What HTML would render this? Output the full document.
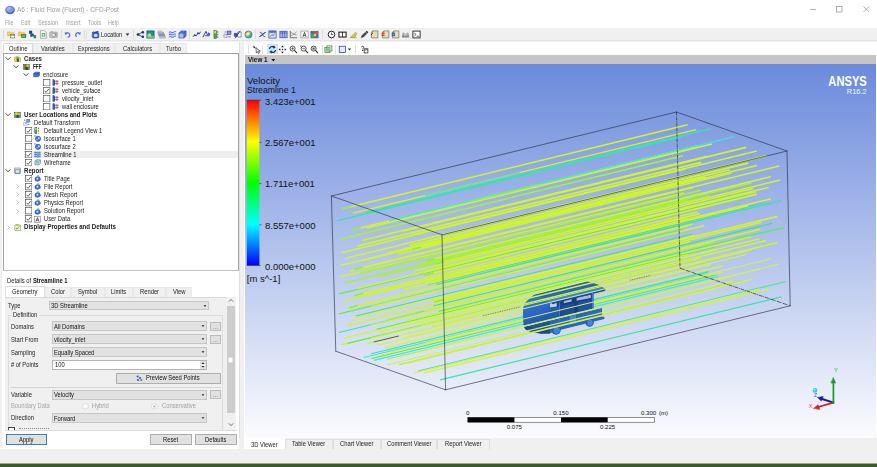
<!DOCTYPE html>
<html><head><meta charset="utf-8"><title>CFD-Post</title>
<style>
*{box-sizing:border-box;margin:0;padding:0}
html,body{width:877px;height:467px;overflow:hidden;background:#fff}
body{font-family:"Liberation Sans",sans-serif;font-size:6.6px;color:#222;-webkit-font-smoothing:antialiased}
#app{position:relative;width:877px;height:467px;overflow:hidden;background:#fff}
.abs{position:absolute}
.t{position:absolute;white-space:nowrap;line-height:8px;height:8px}
.b{font-weight:bold}

</style></head><body>
<div id="app">
<div class="abs" style="left:0;top:0;width:877px;height:28px;background:#fff"></div>
<svg class="abs" style="left:4.6px;top:4.6px" width="10.0" height="10.0" viewBox="0 0 10 10"><defs><radialGradient id="gi" cx="40%" cy="35%" r="65%"><stop offset="0" stop-color="#9fb4ec"/><stop offset="1" stop-color="#3f5fc0"/></radialGradient></defs><ellipse cx="5" cy="5" rx="4.8" ry="4.2" fill="url(#gi)"/><ellipse cx="5" cy="4.6" rx="2.8" ry="1.8" fill="none" stroke="#c9d6f7" stroke-width=".7" opacity=".8"/></svg>
<div class="t" style="left:17.2px;top:4.8px;height:10px;line-height:10px;font-size:7.4px;color:#9c9c9c;transform:scaleX(0.883);transform-origin:0 50%;">A6 : Fluid Flow (Fluent) - CFD-Post</div>
<svg class="abs" style="left:800px;top:0" width="77" height="18" viewBox="0 0 77 18"><g stroke="#9c9c9c" stroke-width=".8" fill="none"><path d="M10 9.5h6"/><rect x="36.5" y="6.5" width="5.5" height="5.5"/><path d="M63.5 6.5l5.5 5.5M69 6.5l-5.5 5.5"/></g></svg>
<div class="t" style="left:5.0px;top:18.8px;height:8px;line-height:8px;font-size:6.4px;color:#a0a0a0;transform:scaleX(0.815);transform-origin:0 50%;">File</div>
<div class="t" style="left:21.2px;top:18.8px;height:8px;line-height:8px;font-size:6.4px;color:#a0a0a0;transform:scaleX(0.834);transform-origin:0 50%;">Edit</div>
<div class="t" style="left:38.2px;top:18.8px;height:8px;line-height:8px;font-size:6.4px;color:#a0a0a0;transform:scaleX(0.878);transform-origin:0 50%;">Session</div>
<div class="t" style="left:65.8px;top:18.8px;height:8px;line-height:8px;font-size:6.4px;color:#a0a0a0;transform:scaleX(0.912);transform-origin:0 50%;">Insert</div>
<div class="t" style="left:88.0px;top:18.8px;height:8px;line-height:8px;font-size:6.4px;color:#a0a0a0;transform:scaleX(0.870);transform-origin:0 50%;">Tools</div>
<div class="t" style="left:108.4px;top:18.8px;height:8px;line-height:8px;font-size:6.4px;color:#a0a0a0;transform:scaleX(0.836);transform-origin:0 50%;">Help</div>
<div class="abs" style="left:0;top:28px;width:877px;height:12px;background:#f0f0f0"></div>
<div class="abs" style="left:0;top:40px;width:877px;height:2.4px;background:#e4e4e4"></div>
<div class="abs" style="left:0;top:41.4px;width:877px;height:1px;background:#f3f3f3"></div>
<div class="abs" style="left:3px;top:30px;width:1px;height:9px;background:#d8d8d8"></div>
<svg class="abs" style="left:7.3px;top:30.0px" width="9.0" height="9.0" viewBox="0 0 10 10"><path d="M0.5 2.2h3l.8.9h3.5v3.2h-7.3z" fill="#f5d547" stroke="#c9a51e" stroke-width=".5"/><rect x="3.6" y="4.8" width="5" height="4" fill="#fff" stroke="#555" stroke-width=".6"/><path d="M4.4 6.2h3.4" stroke="#3a7f3a" stroke-width=".7"/></svg>
<svg class="abs" style="left:17.7px;top:30.0px" width="9.0" height="9.0" viewBox="0 0 10 10"><path d="M0.5 2.2h3l.8.9h3.5v3.2h-7.3z" fill="#f5d547" stroke="#c9a51e" stroke-width=".5"/><rect x="3.8" y="5" width="5" height="3.6" fill="#3f8f4a" stroke="#2a5f2f" stroke-width=".5"/><path d="M4.6 6.8h3.2" stroke="#d9f0d9" stroke-width=".7"/></svg>
<svg class="abs" style="left:28.3px;top:30.0px" width="9.0" height="9.0" viewBox="0 0 10 10"><rect x="1.2" y="0.8" width="3.4" height="3.4" fill="#1d3fa8"/><rect x="3.2" y="4" width="3.2" height="3.2" fill="#24479f"/><path d="M2.9 4.2v3.2h1" stroke="#222" stroke-width=".6" fill="none"/><rect x="6.2" y="5.6" width="2.8" height="3.6" fill="#2f8f3a"/></svg>
<svg class="abs" style="left:39.0px;top:30.0px" width="9.0" height="9.0" viewBox="0 0 10 10"><path d="M1.6.8h4.6l2 2v6.4h-6.6z" fill="#fff" stroke="#6a7a6a" stroke-width=".6"/><rect x="3" y="3.2" width="4" height="4.2" fill="#58b058"/><path d="M3.6 5.4h2.8M5 4v2.8" stroke="#e8ffe8" stroke-width=".7"/></svg>
<svg class="abs" style="left:49.2px;top:30.0px" width="9.0" height="9.0" viewBox="0 0 10 10"><rect x="0.8" y="2.4" width="8.4" height="6" rx=".6" fill="#c9c9c9" stroke="#8a8a8a" stroke-width=".6"/><rect x="2" y="1.4" width="2.4" height="1.2" fill="#aaa"/><circle cx="5.2" cy="5.4" r="1.9" fill="#eee" stroke="#777" stroke-width=".6"/><rect x="6.6" y="3.2" width="1.8" height="3.6" fill="#9a9a9a"/></svg>
<div class="abs" style="left:60.5px;top:30px;width:1px;height:9px;background:#dcdcdc"></div>
<svg class="abs" style="left:63.5px;top:31.0px" width="7.4" height="7.4" viewBox="0 0 10 10"><path d="M2.4 3.6C4 1.6 7.4 2 7.8 4.8 8 6.8 6.6 8.2 4.8 8.6" fill="none" stroke="#4a7ad8" stroke-width="1.7"/><path d="M0.8 1.4l.8 4 3.4-1.8z" fill="#4a7ad8"/></svg>
<svg class="abs" style="left:74.1px;top:31.0px" width="7.4" height="7.4" viewBox="0 0 10 10"><path d="M7.6 3.6C6 1.6 2.6 2 2.2 4.8 2 6 2.6 7 3.8 7.8" fill="none" stroke="#4a7ad8" stroke-width="1.7"/><path d="M9.2 1.4l-.8 4-3.4-1.8z" fill="#4a7ad8"/></svg>
<div class="abs" style="left:84.2px;top:30px;width:1px;height:9px;background:#dcdcdc"></div>
<svg class="abs" style="left:90.5px;top:30.0px" width="9.0" height="9.0" viewBox="0 0 10 10"><path d="M2.2 2.4L7.6 1l1.6 1.4-5 1.6z" fill="#1f3fae"/><rect x="1.4" y="3" width="7.4" height="6" rx="1.8" fill="#3561d8" stroke="#1c3c9c" stroke-width=".6"/><ellipse cx="5.2" cy="6" rx="2.1" ry="1.8" fill="#d4e2ff"/><path d="M1 3.4l1.8-1.6" stroke="#1f3fae" stroke-width="1"/></svg>
<div class="t" style="left:100.6px;top:30.6px;height:8px;line-height:8px;font-size:6.3px;color:#222;transform:scaleX(0.890);transform-origin:0 50%;">Location</div>
<div class="abs" style="left:86px;top:30px;width:1px;height:9px;background:#e4e4e4"></div>
<div class="abs" style="left:133.2px;top:30px;width:1px;height:9px;background:#dcdcdc"></div>
<svg class="abs" style="left:123.1px;top:30.3px" width="9.0" height="9.0" viewBox="0 0 10 10"><path d="M2.9 3.8h4.2L5 6.3z" fill="#222"/></svg>
<svg class="abs" style="left:135.7px;top:30.0px" width="9.0" height="9.0" viewBox="0 0 10 10"><path d="M2 5l5.4-2.6M2 5l5.4 2.6" stroke="#1b2f7a" stroke-width=".9"/><circle cx="2.2" cy="5" r="1.5" fill="#1b2f7a"/><circle cx="7.6" cy="2.4" r="1.4" fill="#1b2f7a"/><circle cx="7.6" cy="7.6" r="1.4" fill="#1b2f7a"/></svg>
<svg class="abs" style="left:146.1px;top:30.0px" width="9.0" height="9.0" viewBox="0 0 10 10"><rect x="1" y="1" width="8" height="8" fill="#1f8f8f" stroke="#15506a" stroke-width=".7"/><path d="M1.4 5.4c2-2.6 4-2.2 4.2 0s2 2.4 3.2.4v2.8h-7.4z" fill="#7fd0a0"/><circle cx="4.2" cy="5.6" r="1.5" fill="#f0d040"/></svg>
<svg class="abs" style="left:157.0px;top:30.0px" width="9.0" height="9.0" viewBox="0 0 10 10"><path d="M1 2.2h6.4v2H1z" fill="#b8c0cc" stroke="#7a8494" stroke-width=".5"/><path d="M2 4.6h6.4v2H2z" fill="#7f9fd8" stroke="#4a64a6" stroke-width=".5"/><path d="M3 7h6.2v2H3z" fill="#c8ccd4" stroke="#7a8494" stroke-width=".5"/><path d="M1 1.2h4" stroke="#8a8a8a" stroke-width=".7"/></svg>
<svg class="abs" style="left:167.5px;top:30.0px" width="9.0" height="9.0" viewBox="0 0 10 10"><path d="M1 2.6c2-1.6 3 1.2 5 0s2-1 3-.6M1 5.2c2-1.6 3 1.2 5 0s2-1 3-.6M1 7.8c2-1.6 3 1.2 5 0s2-1 3-.6" fill="none" stroke="#2c5fc4" stroke-width="1.1"/><path d="M1 4h8M1 6.6h8" stroke="#9ab4e8" stroke-width=".6"/></svg>
<svg class="abs" style="left:177.7px;top:30.0px" width="9.0" height="9.0" viewBox="0 0 10 10"><path d="M1 3.4L3.4 1H9v5.6L6.6 9H1z" fill="#4f7fdc" stroke="#1f3f9a" stroke-width=".6"/><path d="M1 3.4h5.6V9M6.6 3.4L9 1" fill="none" stroke="#1f3f9a" stroke-width=".6"/><rect x="1.6" y="4" width="4.4" height="4.4" fill="#a9c4f4"/></svg>
<div class="abs" style="left:189px;top:30px;width:1px;height:9px;background:#dcdcdc"></div>
<svg class="abs" style="left:191.5px;top:30.0px" width="9.0" height="9.0" viewBox="0 0 10 10"><path d="M1 7.6l2-2 1.6 1 2-3 1.4.8L9.4 2" fill="none" stroke="#2b3f9c" stroke-width="1.1"/><circle cx="3" cy="5.6" r="1" fill="#2b3f9c"/><circle cx="6.6" cy="3.6" r="1" fill="#2b3f9c"/></svg>
<svg class="abs" style="left:201.8px;top:30.0px" width="9.0" height="9.0" viewBox="0 0 10 10"><path d="M1 8l3.4-6.4L6.4 6l2.6-1.6" fill="none" stroke="#2b3f9c" stroke-width="1.1"/><path d="M3.2 6.4h5.6" stroke="#2b3f9c" stroke-width=".9"/><path d="M7 2.4l2.2 2-2.6.8z" fill="#2b3f9c"/></svg>
<svg class="abs" style="left:212.4px;top:30.0px" width="9.0" height="9.0" viewBox="0 0 10 10"><rect x="2.2" y=".8" width="2.8" height="8.4" fill="#3fae4a" stroke="#1c5f24" stroke-width=".6"/><rect x="2.6" y="1.2" width="2" height="2.6" fill="#e9e24a"/><path d="M6.4 1.4v7.4" stroke="#222" stroke-width=".8" stroke-dasharray="1.6 1.2"/></svg>
<svg class="abs" style="left:223.2px;top:30.0px" width="9.0" height="9.0" viewBox="0 0 10 10"><rect x="1" y="4.6" width="3.6" height="3.6" fill="none" stroke="#3a4a8a" stroke-width=".8" stroke-dasharray="1 .8"/><rect x="5.2" y="1.2" width="3.6" height="3.6" fill="#7f9fe0" stroke="#2b3f9c" stroke-width=".7"/><path d="M2 2.2h2M6 7.6h2.6M4.8 4.8l-1.2 1.2" stroke="#2b3f9c" stroke-width=".8"/></svg>
<svg class="abs" style="left:233.4px;top:30.0px" width="9.0" height="9.0" viewBox="0 0 10 10"><path d="M1 3.4h4.2v4H1z" fill="#2f55c8"/><path d="M5.2 2.2h3.8v5.6H5.2z" fill="#fff" stroke="#2f3f7a" stroke-width=".6"/><path d="M2.4 9L8 1" stroke="#1b2660" stroke-width=".9"/></svg>
<svg class="abs" style="left:243.9px;top:30.0px" width="9.0" height="9.0" viewBox="0 0 10 10"><defs><linearGradient id="cw" x1="0" y1="0" x2="1" y2="1"><stop offset="0" stop-color="#e85050"/><stop offset=".35" stop-color="#e8d84a"/><stop offset=".6" stop-color="#4ac86a"/><stop offset="1" stop-color="#3a6ae0"/></linearGradient></defs><circle cx="5" cy="5" r="3.9" fill="url(#cw)" stroke="#3a78c8" stroke-width=".9"/><circle cx="4.4" cy="4.6" r="1.5" fill="#fff" opacity=".75"/></svg>
<div class="abs" style="left:255px;top:30px;width:1px;height:9px;background:#dcdcdc"></div>
<svg class="abs" style="left:257.6px;top:30.0px" width="9.0" height="9.0" viewBox="0 0 10 10"><path d="M1.6 7.6L8.4 2.4" stroke="#1b2f8a" stroke-width="1.2"/><path d="M2 2.6c1.6 0 2.6 1 3 2.4s1.4 2.4 3 2.4" stroke="#2b4fc4" stroke-width="1.1" fill="none"/></svg>
<svg class="abs" style="left:268.3px;top:30.0px" width="9.0" height="9.0" viewBox="0 0 10 10"><rect x="1" y="1" width="8" height="8" fill="#dfe6f6" stroke="#2b4fb4" stroke-width=".8"/><rect x="1.4" y="1.4" width="7.2" height="1.6" fill="#2b4fb4"/><path d="M2.4 7.4l2-2.4 1.4 1.4L7.6 4" fill="none" stroke="#2b4fb4" stroke-width=".8"/></svg>
<svg class="abs" style="left:279.0px;top:30.0px" width="9.0" height="9.0" viewBox="0 0 10 10"><rect x="1" y="1.4" width="8" height="7.2" fill="#a9c0ee" stroke="#2b4fb4" stroke-width=".8"/><path d="M3.7 1.4v7.2M6.3 1.4v7.2M1 3.4h8" stroke="#2b4fb4" stroke-width=".7"/></svg>
<svg class="abs" style="left:289.3px;top:30.0px" width="9.0" height="9.0" viewBox="0 0 10 10"><path d="M1.4 1v7.6H9" fill="none" stroke="#444" stroke-width=".8"/><path d="M2 3c2 0 3 2.4 6.6 2.6" fill="none" stroke="#d04040" stroke-width=".8"/><path d="M2 6.6c2-.4 4-2.4 6.4-4.6" fill="none" stroke="#3f9f4f" stroke-width=".8"/></svg>
<svg class="abs" style="left:299.8px;top:30.0px" width="9.0" height="9.0" viewBox="0 0 10 10"><rect x="1" y="1.2" width="8" height="7.6" fill="#fff" stroke="#8a8a8a" stroke-width=".7"/><path d="M3.2 7.6L5 2.6l1.8 5M3.9 6h2.2" fill="none" stroke="#222" stroke-width=".8"/></svg>
<svg class="abs" style="left:310.3px;top:30.0px" width="9.0" height="9.0" viewBox="0 0 10 10"><rect x="1" y="1.4" width="8" height="7.4" fill="#3b6fc8" stroke="#555" stroke-width=".6"/><rect x="1.4" y="4.6" width="3.6" height="3.8" fill="#3fae4a"/><rect x="5" y="1.8" width="3.6" height="3" fill="#d85040"/><circle cx="5.6" cy="5.6" r="1.5" fill="#e8d84a"/></svg>
<div class="abs" style="left:322px;top:30px;width:1px;height:9px;background:#dcdcdc"></div>
<svg class="abs" style="left:327.4px;top:30.0px" width="9.0" height="9.0" viewBox="0 0 10 10"><circle cx="5" cy="5" r="3.7" fill="#fff" stroke="#222" stroke-width="1.1"/><path d="M5 2.8V5h1.8" fill="none" stroke="#222" stroke-width=".8"/></svg>
<svg class="abs" style="left:338.2px;top:30.0px" width="9.0" height="9.0" viewBox="0 0 10 10"><rect x="1" y="2.4" width="8" height="5.4" fill="#fff" stroke="#222" stroke-width="1.2"/><path d="M5 2.4v5.4" stroke="#222" stroke-width=".9"/></svg>
<svg class="abs" style="left:349.2px;top:30.0px" width="9.0" height="9.0" viewBox="0 0 10 10"><path d="M1.4 8.2L7.4 2.6l1.2 1.2-2 4.4z" fill="#c8c84a" stroke="#8a8a2a" stroke-width=".5"/><path d="M1 8.6h7.6" stroke="#9aa84a" stroke-width=".8"/></svg>
<svg class="abs" style="left:359.6px;top:30.0px" width="9.0" height="9.0" viewBox="0 0 10 10"><path d="M1.2 8.8l1-2.6L6 2.4l1.6 1.6L3.8 7.8z" fill="#444" stroke="#222" stroke-width=".5"/><path d="M6.4 2l1.2-1.2L9.2 2.4 8 3.6z" fill="#222"/><path d="M1.2 8.8l1.6-.6" stroke="#d8c040" stroke-width=".8"/></svg>
<svg class="abs" style="left:370.1px;top:30.0px" width="9.0" height="9.0" viewBox="0 0 10 10"><path d="M3 1h5.8v7.8H1.6V2.6z" fill="#e8dcb8" stroke="#6a6248" stroke-width=".7"/><path d="M3 1v1.8H1.6" fill="none" stroke="#6a6248" stroke-width=".6"/><path d="M1 5.6l2-2" stroke="#222" stroke-width=".9"/></svg>
<svg class="abs" style="left:380.5px;top:30.0px" width="9.0" height="9.0" viewBox="0 0 10 10"><path d="M3 1h5.8v7.8H1.6V2.6z" fill="#e8dcb8" stroke="#6a6248" stroke-width=".7"/><path d="M3 1v1.8H1.6" fill="none" stroke="#6a6248" stroke-width=".6"/><rect x="0.8" y="3" width="3.2" height="3.6" fill="#d83030"/><path d="M1.6 4.8h3" stroke="#fff" stroke-width=".6"/></svg>
<svg class="abs" style="left:390.8px;top:30.0px" width="9.0" height="9.0" viewBox="0 0 10 10"><path d="M3 1h5.8v7.8H1.6V2.6z" fill="#e8dcb8" stroke="#6a6248" stroke-width=".7"/><path d="M3 1v1.8H1.6" fill="none" stroke="#6a6248" stroke-width=".6"/><rect x="0.8" y="3" width="3.6" height="3.8" fill="#2f55c8"/><path d="M1.6 4.9h2.4" stroke="#cfe0ff" stroke-width=".6"/></svg>
<svg class="abs" style="left:401.1px;top:30.0px" width="9.0" height="9.0" viewBox="0 0 10 10"><rect x="1.4" y="3" width="2.4" height="5.2" fill="#a8a8a8"/><rect x="6.2" y="3" width="2.4" height="5.2" fill="#a8a8a8"/><rect x="1" y="6" width="8" height="2.4" fill="#909090"/><rect x="3.8" y="4" width="2.4" height="1.6" fill="#b8b8b8"/></svg>
<svg class="abs" style="left:412.1px;top:30.0px" width="9.0" height="9.0" viewBox="0 0 10 10"><rect x="1" y="1.2" width="8" height="7.6" fill="#fff" stroke="#222" stroke-width="1"/><path d="M2.6 3.4L4.6 5 2.6 6.6M5.2 7h2.4" fill="none" stroke="#222" stroke-width=".8"/></svg>
<div class="abs" style="left:0;top:42.4px;width:245px;height:406px;background:#fff"></div>
<div class="abs" style="left:0;top:42.4px;width:240px;height:11px;background:#fff"></div>
<div class="abs" style="left:2.6px;top:42.6px;width:30.799999999999997px;height:10.600000000000001px;background:#fff;border:0.6px solid #dcdcdc;border-bottom:none"></div>
<div class="t" style="left:8.8px;top:44.9px;height:8px;line-height:8px;font-size:6.3px;color:#222;transform:scaleX(0.922);transform-origin:0 50%;">Outline</div>
<div class="abs" style="left:33.4px;top:43.4px;width:39.6px;height:9.800000000000004px;background:#f0f0f0;border:0.6px solid #e9e9e9;border-bottom:none"></div>
<div class="t" style="left:41.3px;top:44.9px;height:8px;line-height:8px;font-size:6.3px;color:#222;transform:scaleX(0.922);transform-origin:0 50%;">Variables</div>
<div class="abs" style="left:73px;top:43.4px;width:41.5px;height:9.800000000000004px;background:#f0f0f0;border:0.6px solid #e9e9e9;border-bottom:none"></div>
<div class="t" style="left:77.9px;top:44.9px;height:8px;line-height:8px;font-size:6.3px;color:#222;transform:scaleX(0.922);transform-origin:0 50%;">Expressions</div>
<div class="abs" style="left:114.5px;top:43.4px;width:45.0px;height:9.800000000000004px;background:#f0f0f0;border:0.6px solid #e9e9e9;border-bottom:none"></div>
<div class="t" style="left:122.5px;top:44.9px;height:8px;line-height:8px;font-size:6.3px;color:#222;transform:scaleX(0.922);transform-origin:0 50%;">Calculators</div>
<div class="abs" style="left:159.5px;top:43.4px;width:27.5px;height:9.800000000000004px;background:#f0f0f0;border:0.6px solid #e9e9e9;border-bottom:none"></div>
<div class="t" style="left:165.8px;top:44.9px;height:8px;line-height:8px;font-size:6.3px;color:#222;transform:scaleX(0.922);transform-origin:0 50%;">Turbo</div>
<div class="abs" style="left:2.6px;top:53px;width:236px;height:218.4px;background:#fff;border:0.8px solid #a2a2a2;border-bottom-color:#c2c2c2"></div>
<div class="abs" style="left:0;top:42.4px;width:2.2px;height:406px;background:#f0f0f0"></div>
<div class="abs" style="left:23.6px;top:150.9px;width:214.4px;height:7.4px;background:#eeeeee"></div>
<svg class="abs" style="left:5.2px;top:55.7px" width="6" height="5.4" viewBox="0 0 6 5.4"><path d="M.6 1.3L3 3.8 5.4 1.3" fill="none" stroke="#484848" stroke-width="1"/></svg>
<svg class="abs" style="left:14.2px;top:54.8px" width="7" height="7" viewBox="0 0 7 7"><path d="M.6 2h2.4l.6.8h3v3.8H.6z" fill="#e8d86a" stroke="#a89a2a" stroke-width=".5"/><circle cx="3.6" cy="3" r="1.7" fill="#7fb84a"/><circle cx="3.8" cy="4.6" r="1.1" fill="#3a5a2a"/><rect x="2.8" y="5" width="2.2" height="1.6" fill="#444"/></svg>
<div class="t" style="left:24.4px;top:54.7px;height:8px;line-height:8px;font-size:6.3px;font-weight:bold;color:#1a1a1a;transform:scaleX(0.968);transform-origin:0 50%;">Cases</div>
<svg class="abs" style="left:13.2px;top:63.7px" width="6" height="5.4" viewBox="0 0 6 5.4"><path d="M.6 1.3L3 3.8 5.4 1.3" fill="none" stroke="#484848" stroke-width="1"/></svg>
<svg class="abs" style="left:23.2px;top:62.8px" width="7" height="7" viewBox="0 0 7 7"><rect x=".6" y="1.4" width="5.8" height="5.2" fill="#4a9a4a" stroke="#2a5a2a" stroke-width=".5"/><circle cx="2.6" cy="2.4" r="1.4" fill="#d84a3a"/><circle cx="4.6" cy="2.8" r="1.2" fill="#e8c84a"/><rect x="2.4" y="4.2" width="2.4" height="2.4" fill="#2a3a2a"/></svg>
<div class="t" style="left:33.4px;top:62.7px;height:8px;line-height:8px;font-size:6.3px;font-weight:bold;color:#1a1a1a;transform:scaleX(0.745);transform-origin:0 50%;">FFF</div>
<svg class="abs" style="left:23.0px;top:71.8px" width="6" height="5.4" viewBox="0 0 6 5.4"><path d="M.6 1.3L3 3.8 5.4 1.3" fill="none" stroke="#484848" stroke-width="1"/></svg>
<svg class="abs" style="left:33.0px;top:70.9px" width="7" height="7" viewBox="0 0 7 7"><path d="M.6 2.6L2 1.2h4.6v3.2L5.2 5.8H.6z" fill="#3f6fd8" stroke="#1f3f9a" stroke-width=".5"/><path d="M.6 2.6h4.6v3.2M5.2 2.6l1.4-1.4" fill="none" stroke="#1f3f9a" stroke-width=".4"/></svg>
<div class="t" style="left:42.8px;top:70.5px;height:8px;line-height:8px;font-size:6.3px;color:#1a1a1a;transform:scaleX(0.922);transform-origin:0 50%;">enclosure</div>
<svg class="abs" style="left:43.3px;top:78.7px" width="7.4" height="7.4" viewBox="0 0 7.4 7.4"><rect x=".4" y=".4" width="6.5" height="6.5" fill="#fff" stroke="#4a4a4a" stroke-width=".65"/></svg>
<svg class="abs" style="left:52.0px;top:78.9px" width="7" height="7" viewBox="0 0 7 7"><path d="M.8.6h1.4l.8 1v4.2l-.8.8H.8z" fill="#2f5fd0" stroke="#1b3a9a" stroke-width=".4"/><path d="M3.4 2.3h3.2M3.4 4.6h3.2" stroke="#d03030" stroke-width=".8"/><path d="M5 1v5" stroke="#7a2a2a" stroke-width=".6"/></svg>
<div class="t" style="left:61.6px;top:78.5px;height:8px;line-height:8px;font-size:6.3px;color:#1a1a1a;transform:scaleX(0.922);transform-origin:0 50%;">pressure_outlet</div>
<svg class="abs" style="left:43.3px;top:86.7px" width="7.4" height="7.4" viewBox="0 0 7.4 7.4"><rect x=".4" y=".4" width="6.5" height="6.5" fill="#fff" stroke="#4a4a4a" stroke-width=".65"/><path d="M1.6 3.8l1.5 1.5L5.8 2" fill="none" stroke="#333" stroke-width=".8"/></svg>
<svg class="abs" style="left:52.0px;top:86.9px" width="7" height="7" viewBox="0 0 7 7"><path d="M.8.6h1.4l.8 1v4.2l-.8.8H.8z" fill="#2f5fd0" stroke="#1b3a9a" stroke-width=".4"/><path d="M3.4 2.3h3.2M3.4 4.6h3.2" stroke="#d03030" stroke-width=".8"/><path d="M5 1v5" stroke="#7a2a2a" stroke-width=".6"/></svg>
<div class="t" style="left:61.6px;top:86.5px;height:8px;line-height:8px;font-size:6.3px;color:#1a1a1a;transform:scaleX(0.922);transform-origin:0 50%;">vehicle_suface</div>
<svg class="abs" style="left:43.3px;top:94.8px" width="7.4" height="7.4" viewBox="0 0 7.4 7.4"><rect x=".4" y=".4" width="6.5" height="6.5" fill="#fff" stroke="#4a4a4a" stroke-width=".65"/></svg>
<svg class="abs" style="left:52.0px;top:95.0px" width="7" height="7" viewBox="0 0 7 7"><path d="M.8.6h1.4l.8 1v4.2l-.8.8H.8z" fill="#2f5fd0" stroke="#1b3a9a" stroke-width=".4"/><path d="M3.4 2.3h3.2M3.4 4.6h3.2" stroke="#d03030" stroke-width=".8"/><path d="M5 1v5" stroke="#7a2a2a" stroke-width=".6"/></svg>
<div class="t" style="left:61.6px;top:94.6px;height:8px;line-height:8px;font-size:6.3px;color:#1a1a1a;transform:scaleX(0.922);transform-origin:0 50%;">vilocity_inlet</div>
<svg class="abs" style="left:43.3px;top:102.8px" width="7.4" height="7.4" viewBox="0 0 7.4 7.4"><rect x=".4" y=".4" width="6.5" height="6.5" fill="#fff" stroke="#4a4a4a" stroke-width=".65"/></svg>
<svg class="abs" style="left:52.0px;top:103.0px" width="7" height="7" viewBox="0 0 7 7"><path d="M.8.6h1.4l.8 1v4.2l-.8.8H.8z" fill="#2f5fd0" stroke="#1b3a9a" stroke-width=".4"/><path d="M3.4 2.3h3.2M3.4 4.6h3.2" stroke="#d03030" stroke-width=".8"/><path d="M5 1v5" stroke="#7a2a2a" stroke-width=".6"/></svg>
<div class="t" style="left:61.6px;top:102.6px;height:8px;line-height:8px;font-size:6.3px;color:#1a1a1a;transform:scaleX(0.922);transform-origin:0 50%;">wall enclosure</div>
<svg class="abs" style="left:5.2px;top:111.9px" width="6" height="5.4" viewBox="0 0 6 5.4"><path d="M.6 1.3L3 3.8 5.4 1.3" fill="none" stroke="#484848" stroke-width="1"/></svg>
<svg class="abs" style="left:14.2px;top:111.0px" width="7" height="7" viewBox="0 0 7 7"><rect x=".6" y="1.2" width="5.8" height="5.4" fill="#5aa84a" stroke="#2a5a2a" stroke-width=".5"/><circle cx="2.4" cy="2.6" r="1.3" fill="#e8d84a"/><circle cx="4.8" cy="3" r="1.2" fill="#e8c040"/><rect x="2.6" y="4.2" width="2" height="2.4" fill="#2a3a2a"/></svg>
<div class="t" style="left:24.4px;top:110.9px;height:8px;line-height:8px;font-size:6.3px;font-weight:bold;color:#1a1a1a;transform:scaleX(0.968);transform-origin:0 50%;">User Locations and Plots</div>
<svg class="abs" style="left:23.4px;top:119.1px" width="7" height="7" viewBox="0 0 7 7"><rect x="3.8" y=".4" width="2.8" height="2.8" fill="#6f9fe8" stroke="#2b4fb4" stroke-width=".5"/><rect x=".6" y="3.8" width="2.6" height="2.6" fill="none" stroke="#2b4fb4" stroke-width=".6" stroke-dasharray=".9 .6"/><path d="M1 1.2h1.6M3.4 3.4l-1 1M4.4 5.6h2" stroke="#2b4fb4" stroke-width=".7"/></svg>
<div class="t" style="left:33.6px;top:118.7px;height:8px;line-height:8px;font-size:6.3px;color:#1a1a1a;transform:scaleX(0.922);transform-origin:0 50%;">Default Transform</div>
<svg class="abs" style="left:24.5px;top:126.9px" width="7.4" height="7.4" viewBox="0 0 7.4 7.4"><rect x=".4" y=".4" width="6.5" height="6.5" fill="#fff" stroke="#4a4a4a" stroke-width=".65"/><path d="M1.6 3.8l1.5 1.5L5.8 2" fill="none" stroke="#333" stroke-width=".8"/></svg>
<svg class="abs" style="left:33.8px;top:127.1px" width="7" height="7" viewBox="0 0 7 7"><rect x=".8" y=".4" width="2" height="6.2" fill="#3fb86a" stroke="#1c5f24" stroke-width=".5"/><rect x="1.1" y=".7" width="1.4" height="2" fill="#e8e04a"/><rect x="1.1" y="4.6" width="1.4" height="1.7" fill="#3a8ae0"/><path d="M4.6.6v6" stroke="#222" stroke-width=".7" stroke-dasharray="1.6 1"/></svg>
<div class="t" style="left:43.7px;top:126.7px;height:8px;line-height:8px;font-size:6.3px;color:#1a1a1a;transform:scaleX(0.922);transform-origin:0 50%;">Default Legend View 1</div>
<svg class="abs" style="left:24.5px;top:134.9px" width="7.4" height="7.4" viewBox="0 0 7.4 7.4"><rect x=".4" y=".4" width="6.5" height="6.5" fill="#fff" stroke="#4a4a4a" stroke-width=".65"/></svg>
<svg class="abs" style="left:33.8px;top:135.1px" width="7" height="7" viewBox="0 0 7 7"><circle cx="4" cy="3.8" r="2.6" fill="#3f6fe0" stroke="#1f3f9a" stroke-width=".6"/><circle cx="4.8" cy="3.2" r="1" fill="#cfe0ff"/><circle cx="3" cy="4.8" r=".8" fill="#a9c4f4"/><circle cx=".9" cy=".9" r=".7" fill="#2b4fb4"/></svg>
<div class="t" style="left:43.7px;top:134.7px;height:8px;line-height:8px;font-size:6.3px;color:#1a1a1a;transform:scaleX(0.922);transform-origin:0 50%;">Isosurface 1</div>
<svg class="abs" style="left:24.5px;top:143.0px" width="7.4" height="7.4" viewBox="0 0 7.4 7.4"><rect x=".4" y=".4" width="6.5" height="6.5" fill="#fff" stroke="#4a4a4a" stroke-width=".65"/></svg>
<svg class="abs" style="left:33.8px;top:143.2px" width="7" height="7" viewBox="0 0 7 7"><circle cx="4" cy="3.8" r="2.6" fill="#3f6fe0" stroke="#1f3f9a" stroke-width=".6"/><circle cx="4.8" cy="3.2" r="1" fill="#cfe0ff"/><circle cx="3" cy="4.8" r=".8" fill="#a9c4f4"/><circle cx=".9" cy=".9" r=".7" fill="#2b4fb4"/></svg>
<div class="t" style="left:43.7px;top:142.8px;height:8px;line-height:8px;font-size:6.3px;color:#1a1a1a;transform:scaleX(0.922);transform-origin:0 50%;">Isosurface 2</div>
<svg class="abs" style="left:24.5px;top:151.0px" width="7.4" height="7.4" viewBox="0 0 7.4 7.4"><rect x=".4" y=".4" width="6.5" height="6.5" fill="#fff" stroke="#4a4a4a" stroke-width=".65"/><path d="M1.6 3.8l1.5 1.5L5.8 2" fill="none" stroke="#333" stroke-width=".8"/></svg>
<svg class="abs" style="left:33.8px;top:151.2px" width="7" height="7" viewBox="0 0 7 7"><rect x=".4" y=".6" width="6.2" height="5.8" fill="#a9c4f4"/><path d="M.4 1.6c2-1 3 1 4.2.2s1.4-.6 2-.4M.4 3.6c2-1 3 1 4.2.2s1.4-.6 2-.4M.4 5.6c2-1 3 1 4.2.2s1.4-.6 2-.4" fill="none" stroke="#2b5fd0" stroke-width=".9"/></svg>
<div class="t" style="left:43.7px;top:150.8px;height:8px;line-height:8px;font-size:6.3px;color:#1a1a1a;transform:scaleX(0.922);transform-origin:0 50%;">Streamline 1</div>
<svg class="abs" style="left:24.5px;top:159.1px" width="7.4" height="7.4" viewBox="0 0 7.4 7.4"><rect x=".4" y=".4" width="6.5" height="6.5" fill="#fff" stroke="#4a4a4a" stroke-width=".65"/><path d="M1.6 3.8l1.5 1.5L5.8 2" fill="none" stroke="#333" stroke-width=".8"/></svg>
<svg class="abs" style="left:33.8px;top:159.3px" width="7" height="7" viewBox="0 0 7 7"><path d="M1 2.2L2.4.8h4v3.6L5 5.8H1z" fill="#e8f4f8" stroke="#3a6a8a" stroke-width=".6"/><path d="M1 2.2h4v3.6M5 2.2L6.4.8M3 .8v3.6M1 4h4" fill="none" stroke="#3a8a7a" stroke-width=".5"/></svg>
<div class="t" style="left:43.7px;top:158.9px;height:8px;line-height:8px;font-size:6.3px;color:#1a1a1a;transform:scaleX(0.922);transform-origin:0 50%;">Wireframe</div>
<svg class="abs" style="left:5.2px;top:168.2px" width="6" height="5.4" viewBox="0 0 6 5.4"><path d="M.6 1.3L3 3.8 5.4 1.3" fill="none" stroke="#484848" stroke-width="1"/></svg>
<svg class="abs" style="left:14.2px;top:167.3px" width="7" height="7" viewBox="0 0 7 7"><rect x=".8" y="1" width="5.4" height="5.6" fill="#7f9fd8" stroke="#4a5a8a" stroke-width=".5"/><rect x=".8" y="1" width="5.4" height="1.4" fill="#d8d070"/><rect x="1.8" y="3.2" width="3.4" height="2.6" fill="#dfe8f8"/></svg>
<div class="t" style="left:24.4px;top:167.2px;height:8px;line-height:8px;font-size:6.3px;font-weight:bold;color:#1a1a1a;transform:scaleX(0.968);transform-origin:0 50%;">Report</div>
<svg class="abs" style="left:24.5px;top:175.1px" width="7.4" height="7.4" viewBox="0 0 7.4 7.4"><rect x=".4" y=".4" width="6.5" height="6.5" fill="#fff" stroke="#4a4a4a" stroke-width=".65"/><path d="M1.6 3.8l1.5 1.5L5.8 2" fill="none" stroke="#333" stroke-width=".8"/></svg>
<svg class="abs" style="left:33.8px;top:175.3px" width="7" height="7" viewBox="0 0 7 7"><path d="M1 3l2.2-1.4L6 2.6 6.4 5 3.6 6.4 1 5.4z" fill="#3f6fe0" stroke="#1f3f9a" stroke-width=".5"/><path d="M3.2 1.6L3.8.4l1.4.6-.4 1.2" fill="#a9c4f4" stroke="#2b4fb4" stroke-width=".4"/><circle cx="3.4" cy="3.8" r="1" fill="#cfe0ff"/></svg>
<div class="t" style="left:43.8px;top:174.9px;height:8px;line-height:8px;font-size:6.3px;color:#1a1a1a;transform:scaleX(0.922);transform-origin:0 50%;">Title Page</div>
<svg class="abs" style="left:15.1px;top:184.4px" width="5" height="5" viewBox="0 0 5 5"><path d="M1.6 .6L3.6 2.5 1.6 4.4" fill="none" stroke="#a8a8a8" stroke-width=".8"/></svg>
<svg class="abs" style="left:24.5px;top:183.2px" width="7.4" height="7.4" viewBox="0 0 7.4 7.4"><rect x=".4" y=".4" width="6.5" height="6.5" fill="#fff" stroke="#4a4a4a" stroke-width=".65"/><path d="M1.6 3.8l1.5 1.5L5.8 2" fill="none" stroke="#333" stroke-width=".8"/></svg>
<svg class="abs" style="left:33.8px;top:183.4px" width="7" height="7" viewBox="0 0 7 7"><path d="M1 3l2.2-1.4L6 2.6 6.4 5 3.6 6.4 1 5.4z" fill="#3f6fe0" stroke="#1f3f9a" stroke-width=".5"/><path d="M3.2 1.6L3.8.4l1.4.6-.4 1.2" fill="#a9c4f4" stroke="#2b4fb4" stroke-width=".4"/><circle cx="3.4" cy="3.8" r="1" fill="#cfe0ff"/></svg>
<div class="t" style="left:43.8px;top:183.0px;height:8px;line-height:8px;font-size:6.3px;color:#1a1a1a;transform:scaleX(0.922);transform-origin:0 50%;">File Report</div>
<svg class="abs" style="left:15.1px;top:192.4px" width="5" height="5" viewBox="0 0 5 5"><path d="M1.6 .6L3.6 2.5 1.6 4.4" fill="none" stroke="#a8a8a8" stroke-width=".8"/></svg>
<svg class="abs" style="left:24.5px;top:191.2px" width="7.4" height="7.4" viewBox="0 0 7.4 7.4"><rect x=".4" y=".4" width="6.5" height="6.5" fill="#fff" stroke="#4a4a4a" stroke-width=".65"/><path d="M1.6 3.8l1.5 1.5L5.8 2" fill="none" stroke="#333" stroke-width=".8"/></svg>
<svg class="abs" style="left:33.8px;top:191.4px" width="7" height="7" viewBox="0 0 7 7"><path d="M1 3l2.2-1.4L6 2.6 6.4 5 3.6 6.4 1 5.4z" fill="#3f6fe0" stroke="#1f3f9a" stroke-width=".5"/><path d="M3.2 1.6L3.8.4l1.4.6-.4 1.2" fill="#a9c4f4" stroke="#2b4fb4" stroke-width=".4"/><circle cx="3.4" cy="3.8" r="1" fill="#cfe0ff"/></svg>
<div class="t" style="left:43.8px;top:191.0px;height:8px;line-height:8px;font-size:6.3px;color:#1a1a1a;transform:scaleX(0.922);transform-origin:0 50%;">Mesh Report</div>
<svg class="abs" style="left:15.1px;top:200.4px" width="5" height="5" viewBox="0 0 5 5"><path d="M1.6 .6L3.6 2.5 1.6 4.4" fill="none" stroke="#a8a8a8" stroke-width=".8"/></svg>
<svg class="abs" style="left:24.5px;top:199.2px" width="7.4" height="7.4" viewBox="0 0 7.4 7.4"><rect x=".4" y=".4" width="6.5" height="6.5" fill="#fff" stroke="#4a4a4a" stroke-width=".65"/><path d="M1.6 3.8l1.5 1.5L5.8 2" fill="none" stroke="#333" stroke-width=".8"/></svg>
<svg class="abs" style="left:33.8px;top:199.4px" width="7" height="7" viewBox="0 0 7 7"><path d="M1 3l2.2-1.4L6 2.6 6.4 5 3.6 6.4 1 5.4z" fill="#3f6fe0" stroke="#1f3f9a" stroke-width=".5"/><path d="M3.2 1.6L3.8.4l1.4.6-.4 1.2" fill="#a9c4f4" stroke="#2b4fb4" stroke-width=".4"/><circle cx="3.4" cy="3.8" r="1" fill="#cfe0ff"/></svg>
<div class="t" style="left:43.8px;top:199.0px;height:8px;line-height:8px;font-size:6.3px;color:#1a1a1a;transform:scaleX(0.922);transform-origin:0 50%;">Physics Report</div>
<svg class="abs" style="left:15.1px;top:208.5px" width="5" height="5" viewBox="0 0 5 5"><path d="M1.6 .6L3.6 2.5 1.6 4.4" fill="none" stroke="#a8a8a8" stroke-width=".8"/></svg>
<svg class="abs" style="left:24.5px;top:207.3px" width="7.4" height="7.4" viewBox="0 0 7.4 7.4"><rect x=".4" y=".4" width="6.5" height="6.5" fill="#fff" stroke="#4a4a4a" stroke-width=".65"/></svg>
<svg class="abs" style="left:33.8px;top:207.5px" width="7" height="7" viewBox="0 0 7 7"><path d="M1 3l2.2-1.4L6 2.6 6.4 5 3.6 6.4 1 5.4z" fill="#3f6fe0" stroke="#1f3f9a" stroke-width=".5"/><path d="M3.2 1.6L3.8.4l1.4.6-.4 1.2" fill="#a9c4f4" stroke="#2b4fb4" stroke-width=".4"/><circle cx="3.4" cy="3.8" r="1" fill="#cfe0ff"/></svg>
<div class="t" style="left:43.8px;top:207.1px;height:8px;line-height:8px;font-size:6.3px;color:#1a1a1a;transform:scaleX(0.922);transform-origin:0 50%;">Solution Report</div>
<svg class="abs" style="left:24.5px;top:215.3px" width="7.4" height="7.4" viewBox="0 0 7.4 7.4"><rect x=".4" y=".4" width="6.5" height="6.5" fill="#fff" stroke="#4a4a4a" stroke-width=".65"/><path d="M1.6 3.8l1.5 1.5L5.8 2" fill="none" stroke="#333" stroke-width=".8"/></svg>
<svg class="abs" style="left:33.8px;top:215.5px" width="7" height="7" viewBox="0 0 7 7"><rect x=".5" y=".5" width="6" height="6" fill="#fff" stroke="#7a7a7a" stroke-width=".6"/><path d="M2 5.6L3.5 1.6 5 5.6M2.6 4.2h1.8" fill="none" stroke="#222" stroke-width=".7"/></svg>
<div class="t" style="left:43.8px;top:215.1px;height:8px;line-height:8px;font-size:6.3px;color:#1a1a1a;transform:scaleX(0.922);transform-origin:0 50%;">User Data</div>
<svg class="abs" style="left:5.7px;top:224.5px" width="5" height="5" viewBox="0 0 5 5"><path d="M1.6 .6L3.6 2.5 1.6 4.4" fill="none" stroke="#a8a8a8" stroke-width=".8"/></svg>
<svg class="abs" style="left:14.2px;top:223.5px" width="7" height="7" viewBox="0 0 7 7"><path d="M.8 1h5.6v5.6H.8z" fill="#eef6d8" stroke="#6a9a3a" stroke-width=".6"/><path d="M2 4l1 1.2L5.2 2.4" fill="none" stroke="#4a9a3a" stroke-width=".8"/><rect x="2.4" y=".2" width="2.2" height="1.4" fill="#e8d84a" stroke="#a89a2a" stroke-width=".3"/></svg>
<div class="t" style="left:24.4px;top:223.4px;height:8px;line-height:8px;font-size:6.3px;font-weight:bold;color:#1a1a1a;transform:scaleX(0.968);transform-origin:0 50%;">Display Properties and Defaults</div>
<div class="t" style="left:7.0px;top:276.6px;height:8px;line-height:8px;font-size:6.3px;color:#222;transform:scaleX(0.922);transform-origin:0 50%;">Details of </div>
<div class="t" style="left:32.8px;top:277.3px;height:8px;line-height:8px;font-size:6.3px;font-weight:bold;color:#111;transform:scaleX(0.922);transform-origin:0 50%;">Streamline 1</div>
<div class="abs" style="left:5px;top:286px;width:39.8px;height:10.800000000000011px;background:#fff;border:0.6px solid #dcdcdc;border-bottom:none"></div>
<div class="t" style="left:12.1px;top:288.2px;height:8px;line-height:8px;font-size:6.3px;color:#222;transform:scaleX(0.922);transform-origin:0 50%;">Geometry</div>
<div class="abs" style="left:44.8px;top:286.8px;width:26.200000000000003px;height:10.0px;background:#f0f0f0;border:0.6px solid #e9e9e9;border-bottom:none"></div>
<div class="t" style="left:51.0px;top:288.2px;height:8px;line-height:8px;font-size:6.3px;color:#222;transform:scaleX(0.922);transform-origin:0 50%;">Color</div>
<div class="abs" style="left:71px;top:286.8px;width:33.599999999999994px;height:10.0px;background:#f0f0f0;border:0.6px solid #e9e9e9;border-bottom:none"></div>
<div class="t" style="left:78.1px;top:288.2px;height:8px;line-height:8px;font-size:6.3px;color:#222;transform:scaleX(0.922);transform-origin:0 50%;">Symbol</div>
<div class="abs" style="left:104.6px;top:286.8px;width:28.400000000000006px;height:10.0px;background:#f0f0f0;border:0.6px solid #e9e9e9;border-bottom:none"></div>
<div class="t" style="left:111.2px;top:288.2px;height:8px;line-height:8px;font-size:6.3px;color:#222;transform:scaleX(0.922);transform-origin:0 50%;">Limits</div>
<div class="abs" style="left:133px;top:286.8px;width:33px;height:10.0px;background:#f0f0f0;border:0.6px solid #e9e9e9;border-bottom:none"></div>
<div class="t" style="left:140.0px;top:288.2px;height:8px;line-height:8px;font-size:6.3px;color:#222;transform:scaleX(0.922);transform-origin:0 50%;">Render</div>
<div class="abs" style="left:166px;top:286.8px;width:26px;height:10.0px;background:#f0f0f0;border:0.6px solid #e9e9e9;border-bottom:none"></div>
<div class="t" style="left:172.8px;top:288.2px;height:8px;line-height:8px;font-size:6.3px;color:#222;transform:scaleX(0.922);transform-origin:0 50%;">View</div>
<div class="abs" style="left:5px;top:296.6px;width:221px;height:133.6px;background:#f0f0f0;border-top:0.6px solid #d9d9d9"></div>
<div class="abs" style="left:5px;top:430.2px;width:232px;height:0.6px;background:#dcdcdc"></div>
<div class="t" style="left:8.4px;top:301.5px;height:8px;line-height:8px;font-size:6.3px;color:#222;transform:scaleX(0.922);transform-origin:0 50%;">Type</div>
<div class="abs" style="left:49px;top:301.3px;width:160px;height:8.6px;background:#e2e2e2;border:0.6px solid #c6c6c6"></div><div class="t" style="left:51.2px;top:302.1px;height:8px;line-height:8px;font-size:6.3px;color:#111;transform:scaleX(0.922);transform-origin:0 50%;">3D Streamline</div><svg class="abs" style="left:203.4px;top:303.6px" width="4" height="4" viewBox="0 0 4 4"><path d="M.6 1.2h2.8L2 3z" fill="#222"/></svg>
<div class="abs" style="left:8px;top:314.6px;width:215px;height:115.6px;border:0.6px solid #dcdcdc;border-bottom:none"></div>
<div class="abs" style="left:11.6px;top:311px;width:27.6px;height:7px;background:#f0f0f0"></div>
<div class="t" style="left:12.8px;top:310.8px;height:8px;line-height:8px;font-size:6.3px;color:#222;transform:scaleX(0.922);transform-origin:0 50%;">Definition</div>
<div class="t" style="left:10.8px;top:322.9px;height:8px;line-height:8px;font-size:6.3px;color:#222;transform:scaleX(0.922);transform-origin:0 50%;">Domains</div>
<div class="abs" style="left:52.2px;top:321.3px;width:154.60000000000002px;height:10.2px;background:#e2e2e2;border:0.6px solid #c6c6c6"></div><div class="t" style="left:54.4px;top:322.9px;height:8px;line-height:8px;font-size:6.3px;color:#111;transform:scaleX(0.922);transform-origin:0 50%;">All Domains</div><svg class="abs" style="left:201.2px;top:324.4px" width="4" height="4" viewBox="0 0 4 4"><path d="M.6 1.2h2.8L2 3z" fill="#222"/></svg>
<div class="abs" style="left:210px;top:321.7px;width:10.800000000000011px;height:9.4px;background:#e1e1e1;border:0.6px solid #bcbcbc"></div><div class="t" style="left:213.2px;top:323.0px;height:8px;line-height:8px;font-size:5.4px;color:#333;transform:scaleX(1.076);transform-origin:0 50%;">...</div>
<div class="t" style="left:10.8px;top:335.8px;height:8px;line-height:8px;font-size:6.3px;color:#222;transform:scaleX(0.922);transform-origin:0 50%;">Start From</div>
<div class="abs" style="left:52.2px;top:334.2px;width:154.60000000000002px;height:10.2px;background:#e2e2e2;border:0.6px solid #c6c6c6"></div><div class="t" style="left:54.4px;top:335.8px;height:8px;line-height:8px;font-size:6.3px;color:#111;transform:scaleX(0.922);transform-origin:0 50%;">vilocity_inlet</div><svg class="abs" style="left:201.2px;top:337.3px" width="4" height="4" viewBox="0 0 4 4"><path d="M.6 1.2h2.8L2 3z" fill="#222"/></svg>
<div class="abs" style="left:210px;top:334.6px;width:10.800000000000011px;height:9.4px;background:#e1e1e1;border:0.6px solid #bcbcbc"></div><div class="t" style="left:213.2px;top:335.9px;height:8px;line-height:8px;font-size:5.4px;color:#333;transform:scaleX(1.076);transform-origin:0 50%;">...</div>
<div class="t" style="left:10.8px;top:348.9px;height:8px;line-height:8px;font-size:6.3px;color:#222;transform:scaleX(0.922);transform-origin:0 50%;">Sampling</div>
<div class="abs" style="left:52.2px;top:347.3px;width:154.60000000000002px;height:10.2px;background:#e2e2e2;border:0.6px solid #c6c6c6"></div><div class="t" style="left:54.4px;top:348.9px;height:8px;line-height:8px;font-size:6.3px;color:#111;transform:scaleX(0.922);transform-origin:0 50%;">Equally Spaced</div><svg class="abs" style="left:201.2px;top:350.4px" width="4" height="4" viewBox="0 0 4 4"><path d="M.6 1.2h2.8L2 3z" fill="#222"/></svg>
<div class="t" style="left:10.8px;top:360.8px;height:8px;line-height:8px;font-size:6.3px;color:#222;transform:scaleX(0.922);transform-origin:0 50%;"># of Points</div>
<div class="abs" style="left:52.2px;top:359.8px;width:154.6px;height:9.8px;background:#fff;border:0.6px solid #b4b4b4"></div>
<div class="t" style="left:54.6px;top:360.8px;height:8px;line-height:8px;font-size:6.3px;color:#111;transform:scaleX(0.922);transform-origin:0 50%;">100</div>
<svg class="abs" style="left:199.8px;top:360.6px" width="6" height="8" viewBox="0 0 6 8"><rect x=".3" y=".3" width="5.4" height="7.4" fill="#f0f0f0" stroke="#bdbdbd" stroke-width=".4"/><path d="M1.4 3L3 1.2 4.6 3zM1.4 5L3 6.8 4.6 5z" fill="#222"/></svg>
<div class="abs" style="left:116px;top:372.8px;width:104.8px;height:10.8px;background:#e1e1e1;border:0.6px solid #adadad"></div>
<svg class="abs" style="left:136.0px;top:374.6px" width="7" height="7" viewBox="0 0 7 7"><circle cx="1.6" cy="1.6" r="1" fill="#2b4fb4"/><circle cx="4" cy="3" r="1" fill="#2b4fb4"/><circle cx="2" cy="5" r="1" fill="#2b4fb4"/><path d="M4.6 4l2 1-2 1z" fill="#333"/></svg>
<div class="t" style="left:145.6px;top:374.2px;height:8px;line-height:8px;font-size:6.3px;color:#111;transform:scaleX(0.922);transform-origin:0 50%;">Preview Seed Points</div>
<div class="abs" style="left:10px;top:386.6px;width:211px;height:0.7px;background:#d4d4d4"></div>
<div class="t" style="left:10.8px;top:390.7px;height:8px;line-height:8px;font-size:6.3px;color:#222;transform:scaleX(0.922);transform-origin:0 50%;">Variable</div>
<div class="abs" style="left:52.2px;top:389.6px;width:154.60000000000002px;height:10.2px;background:#e2e2e2;border:0.6px solid #c6c6c6"></div><div class="t" style="left:54.4px;top:391.2px;height:8px;line-height:8px;font-size:6.3px;color:#111;transform:scaleX(0.922);transform-origin:0 50%;">Velocity</div><svg class="abs" style="left:201.2px;top:392.7px" width="4" height="4" viewBox="0 0 4 4"><path d="M.6 1.2h2.8L2 3z" fill="#222"/></svg>
<div class="abs" style="left:210px;top:390.0px;width:10.800000000000011px;height:9.4px;background:#e1e1e1;border:0.6px solid #bcbcbc"></div><div class="t" style="left:213.2px;top:391.3px;height:8px;line-height:8px;font-size:5.4px;color:#333;transform:scaleX(1.076);transform-origin:0 50%;">...</div>
<div class="t" style="left:10.8px;top:402.4px;height:8px;line-height:8px;font-size:6.3px;color:#a6a6a6;transform:scaleX(0.922);transform-origin:0 50%;">Boundary Data</div>
<svg class="abs" style="left:81.6px;top:403.2px" width="7" height="7" viewBox="0 0 7 7"><circle cx="3.4" cy="3.4" r="2.8" fill="#fff" stroke="#c4c4c4" stroke-width=".6"/></svg>
<div class="t" style="left:92.0px;top:402.4px;height:8px;line-height:8px;font-size:6.3px;color:#a0a0a0;transform:scaleX(0.922);transform-origin:0 50%;">Hybrid</div>
<svg class="abs" style="left:151.0px;top:403.2px" width="7" height="7" viewBox="0 0 7 7"><circle cx="3.4" cy="3.4" r="2.8" fill="#fff" stroke="#c4c4c4" stroke-width=".6"/><circle cx="3.4" cy="3.4" r="1.2" fill="#c0c0c0"/></svg>
<div class="t" style="left:161.5px;top:402.4px;height:8px;line-height:8px;font-size:6.3px;color:#a0a0a0;transform:scaleX(0.922);transform-origin:0 50%;">Conservative</div>
<div class="t" style="left:10.8px;top:414.1px;height:8px;line-height:8px;font-size:6.3px;color:#222;transform:scaleX(0.922);transform-origin:0 50%;">Direction</div>
<div class="abs" style="left:52.2px;top:413.0px;width:154.60000000000002px;height:10.2px;background:#e2e2e2;border:0.6px solid #c6c6c6"></div><div class="t" style="left:54.4px;top:414.6px;height:8px;line-height:8px;font-size:6.3px;color:#111;transform:scaleX(0.922);transform-origin:0 50%;">Forward</div><svg class="abs" style="left:201.2px;top:416.1px" width="4" height="4" viewBox="0 0 4 4"><path d="M.6 1.2h2.8L2 3z" fill="#222"/></svg>
<div class="abs" style="left:5px;top:425.6px;width:221px;height:4.6px;overflow:hidden"><div class="abs" style="left:3.2px;top:1px;width:6.4px;height:6.4px;background:#fff;border:0.7px solid #444"></div><div class="abs" style="left:14px;top:2.6px;width:30px;height:1px;border-top:1px dotted #8a8a8a"></div></div>
<div class="abs" style="left:225.8px;top:296.6px;width:9.8px;height:133.6px;background:#f0f0f0"></div>
<div class="abs" style="left:226.6px;top:306.4px;width:8.2px;height:107px;background:#cdcdcd"></div>
<svg class="abs" style="left:228.0px;top:298.4px" width="6" height="5" viewBox="0 0 6 5"><path d="M.8 3.6L3 1.4 5.2 3.6" fill="none" stroke="#555" stroke-width=".8"/></svg>
<svg class="abs" style="left:228.0px;top:421.8px" width="6" height="5" viewBox="0 0 6 5"><path d="M.8 1.4L3 3.6 5.2 1.4" fill="none" stroke="#555" stroke-width=".8"/></svg>
<div class="abs" style="left:228.4px;top:356.8px;width:4.8px;height:5.8px;background:#fff;border:0.5px solid #e0e0e0"></div>
<div class="abs" style="left:5.8px;top:434.2px;width:41.2px;height:11.199999999999989px;background:#e1e1e1;border:1px solid #3c7fb1"></div><div class="t" style="left:19.1px;top:435.8px;height:8px;line-height:8px;font-size:6.3px;color:#111;transform:scaleX(0.922);transform-origin:0 50%;">Apply</div>
<div class="abs" style="left:150px;top:434.4px;width:41.599999999999994px;height:10.800000000000011px;background:#e1e1e1;border:0.6px solid #adadad"></div><div class="t" style="left:163.2px;top:435.8px;height:8px;line-height:8px;font-size:6.3px;color:#111;transform:scaleX(0.922);transform-origin:0 50%;">Reset</div>
<div class="abs" style="left:195px;top:434.4px;width:42px;height:10.800000000000011px;background:#e1e1e1;border:0.6px solid #adadad"></div><div class="t" style="left:205.3px;top:435.8px;height:8px;line-height:8px;font-size:6.3px;color:#111;transform:scaleX(0.922);transform-origin:0 50%;">Defaults</div>
<div class="abs" style="left:238.8px;top:42.4px;width:5.6px;height:406px;background:#f0f0f0"></div>
<div class="abs" style="left:238.6px;top:42.4px;width:.6px;height:406px;background:#e0e0e0"></div>
<div class="abs" style="left:244.4px;top:42.4px;width:633px;height:12.8px;background:#fff"></div>
<div class="abs" style="left:247.5px;top:44.5px;width:1px;height:9.0px;background:#e0e0e0"></div>
<svg class="abs" style="left:251.5px;top:44.7px" width="9.0" height="9.0" viewBox="0 0 10 10"><path d="M4.4 3l.4 6 1.4-1.6 1 2 1-.5-1-2 2 0z" fill="#fff" stroke="#222" stroke-width=".7"/><path d="M1.2 2l2.6 1.2M2.2 1l.8 2.6" stroke="#222" stroke-width=".9"/></svg>
<div class="abs" style="left:262.3px;top:44.5px;width:1px;height:9.0px;background:#e0e0e0"></div>
<div class="abs" style="left:267.2px;top:43.8px;width:10.8px;height:10.6px;background:#cce4f7"></div>
<svg class="abs" style="left:268.1px;top:44.7px" width="9.0" height="9.0" viewBox="0 0 10 10"><path d="M1.6 4.2C2 2 4.6 1 6.6 2.4M8.4 5.8C8 8 5.4 9 3.4 7.6" fill="none" stroke="#1b2660" stroke-width="1.4"/><path d="M5.6 .6l3 1.6-2.4 2z" fill="#1b2660"/><path d="M4.4 9.4l-3-1.6 2.4-2z" fill="#1b2660"/></svg>
<svg class="abs" style="left:278.1px;top:44.7px" width="9.0" height="9.0" viewBox="0 0 10 10"><path d="M5 .6l1.5 2h-3zM5 9.4l1.5-2h-3zM.6 5l2-1.5v3zM9.4 5l-2-1.5v3z" fill="#222"/><circle cx="5" cy="5" r=".8" fill="#222"/></svg>
<svg class="abs" style="left:288.5px;top:44.7px" width="9.0" height="9.0" viewBox="0 0 10 10"><circle cx="4" cy="4" r="2.8" fill="#f4f4f4" stroke="#333" stroke-width=".9"/><path d="M6 6l3 3" stroke="#333" stroke-width="1.3"/><path d="M2.6 4h2.8M4 2.6v2.8" stroke="#333" stroke-width=".7"/></svg>
<svg class="abs" style="left:299.5px;top:44.7px" width="9.0" height="9.0" viewBox="0 0 10 10"><circle cx="4" cy="4" r="2.8" fill="#f4f4f4" stroke="#333" stroke-width=".9"/><path d="M6 6l3 3" stroke="#333" stroke-width="1.3"/><path d="M2.6 4h2.8" stroke="#333" stroke-width=".7"/><path d="M.6 .6h2M.6 .6v2" stroke="#666" stroke-width=".5" fill="none"/></svg>
<svg class="abs" style="left:309.9px;top:44.7px" width="9.0" height="9.0" viewBox="0 0 10 10"><circle cx="4" cy="4" r="2.8" fill="#f4f4f4" stroke="#333" stroke-width=".9"/><path d="M6 6l3 3" stroke="#333" stroke-width="1.3"/><rect x="2.8" y="2.8" width="2.4" height="2.4" fill="#555"/></svg>
<div class="abs" style="left:321.8px;top:44.5px;width:1px;height:9.0px;background:#e0e0e0"></div>
<svg class="abs" style="left:323.5px;top:44.7px" width="9.0" height="9.0" viewBox="0 0 10 10"><rect x="1" y="2.6" width="5.6" height="5.6" fill="#cfe8cf" stroke="#3a7a3a" stroke-width=".8"/><rect x="3.2" y="1" width="5.6" height="5.6" fill="none" stroke="#3a7a3a" stroke-width=".8"/><rect x="3.2" y="2.6" width="3.4" height="4" fill="#8fc88f"/></svg>
<div class="abs" style="left:335.2px;top:44.5px;width:1px;height:9.0px;background:#e0e0e0"></div>
<svg class="abs" style="left:337.5px;top:44.7px" width="9.0" height="9.0" viewBox="0 0 10 10"><rect x="1.4" y="1.4" width="7" height="7" fill="#e4e8f8" stroke="#3a4a9a" stroke-width=".9"/></svg>
<svg class="abs" style="left:344.5px;top:45.1px" width="9.0" height="9.0" viewBox="0 0 10 10"><path d="M3.2 4h3.6L5 6z" fill="#222"/></svg>
<div class="abs" style="left:355px;top:44.5px;width:1px;height:9.0px;background:#e0e0e0"></div>
<svg class="abs" style="left:359.5px;top:44.7px" width="9.0" height="9.0" viewBox="0 0 10 10"><path d="M1.6 2.6c0-1.6 2.6-1.6 2.6 0 0 1-1.2 1-1.2 2" fill="none" stroke="#222" stroke-width=".9"/><rect x="4.6" y="4.2" width="4.2" height="4.6" fill="#fff" stroke="#222" stroke-width=".8"/><path d="M4.6 5.4h4.2" stroke="#222" stroke-width=".8"/><circle cx="3" cy="6" r=".6" fill="#222"/></svg>
<div class="abs" style="left:244.8px;top:55.2px;width:631px;height:8.8px;background:#c5c5c5"></div>
<div class="t" style="left:248.0px;top:55.8px;height:8px;line-height:8px;font-size:6.3px;font-weight:bold;color:#111;transform:scaleX(1.005);transform-origin:0 50%;">View 1</div>
<svg class="abs" style="left:270.6px;top:57.6px" width="5" height="5" viewBox="0 0 5 5"><path d="M.4 1h3.8L2.3 3.4z" fill="#111"/></svg>
<svg class="abs" style="left:244.8px;top:64px" width="631" height="374.5" viewBox="244.8 64 631 374.5">
<defs><linearGradient id="bg" x1="0" y1="0" x2="0" y2="1"><stop offset="0" stop-color="#6a8adb"/><stop offset="1" stop-color="#fcfcfe"/></linearGradient><linearGradient id="lg" x1="0" y1="0" x2="0" y2="1"><stop offset="0" stop-color="#ff0000"/><stop offset=".125" stop-color="#ff8000"/><stop offset=".25" stop-color="#ffff00"/><stop offset=".375" stop-color="#80ff00"/><stop offset=".5" stop-color="#00ff00"/><stop offset=".625" stop-color="#00ff80"/><stop offset=".75" stop-color="#00ffff"/><stop offset=".875" stop-color="#0080ff"/><stop offset="1" stop-color="#0000ff"/></linearGradient><filter id="soft" x="-5%" y="-5%" width="110%" height="110%"><feGaussianBlur stdDeviation="0.4"/></filter></defs>
<rect x="244.8" y="64" width="631" height="374.5" fill="url(#bg)"/>
<g fill="none" stroke-linecap="butt" filter="url(#soft)">
<path d="M347.3 308.5L687.5 225.8" stroke="#d0f52e" stroke-width="1.67"/>
<path d="M342.1 208.8L687.5 124.7" stroke="#d0f52e" stroke-width="1.44"/>
<path d="M342.1 208.8L351.1 206.6" stroke="#8eea50" stroke-width="1.44"/>
<path d="M352.8 213.1L696.0 129.6" stroke="#d0f52e" stroke-width="1.44"/>
<path d="M365.7 212.6L710.7 128.6" stroke="#38e2b4" stroke-width="1.34"/>
<path d="M337.4 220.6L682.4 136.6" stroke="#38e2b4" stroke-width="1.34"/>
<path d="M351.8 230.0L696.8 146.0" stroke="#d0f52e" stroke-width="1.44"/>
<path d="M351.8 230.0L360.8 227.8" stroke="#8eea50" stroke-width="1.44"/>
<path d="M389.0 220.7L734.2 136.7" stroke="#3fe4dc" stroke-width="1.34"/>
<path d="M366.7 228.0L711.7 144.0" stroke="#d0f52e" stroke-width="1.54"/>
<path d="M339.6 239.3L682.8 155.8" stroke="#a8f03a" stroke-width="1.44"/>
<path d="M362.5 240.3L707.0 156.4" stroke="#d0f52e" stroke-width="1.63"/>
<path d="M357.0 246.1L701.0 162.4" stroke="#d0f52e" stroke-width="1.63"/>
<path d="M341.0 252.7L685.0 169.0" stroke="#d0f52e" stroke-width="1.54"/>
<path d="M346.4 258.0L690.0 174.4" stroke="#d0f52e" stroke-width="1.63"/>
<path d="M338.9 293.9L683.0 210.1" stroke="#5eec5c" stroke-width="1.25"/>
<path d="M338.9 313.8L683.0 230.0" stroke="#5eec5c" stroke-width="1.34"/>
<path d="M338.9 332.5L683.0 248.7" stroke="#38e2b4" stroke-width="1.25"/>
<path d="M341.0 344.7L685.0 261.0" stroke="#d0f52e" stroke-width="1.44"/>
<path d="M363.5 357.5L708.0 273.6" stroke="#3fe4dc" stroke-width="1.25"/>
<path d="M373.8 360.3L718.0 276.5" stroke="#3fe4dc" stroke-width="1.25"/>
<path d="M371.0 358.7L716.0 274.7" stroke="#5eec5c" stroke-width="1.25"/>
<path d="M347.5 343.4L692.0 259.5" stroke="#5eec5c" stroke-width="1.25"/>
<path d="M361.4 260.7L705.0 177.1" stroke="#d0f52e" stroke-width="1.54"/>
<path d="M340.0 265.4L684.0 181.7" stroke="#d0f52e" stroke-width="1.54"/>
<path d="M340.4 276.7L684.0 193.1" stroke="#d0f52e" stroke-width="1.54"/>
<path d="M357.0 288.5L700.0 205.0" stroke="#d0f52e" stroke-width="1.54"/>
<path d="M353.9 295.4L697.0 211.9" stroke="#d0f52e" stroke-width="1.54"/>
<path d="M353.9 295.4L362.9 293.2" stroke="#8eea50" stroke-width="1.54"/>
<path d="M348.6 307.8L692.0 224.2" stroke="#d0f52e" stroke-width="1.54"/>
<path d="M348.6 307.8L357.6 305.6" stroke="#8eea50" stroke-width="1.54"/>
<path d="M346.4 325.4L690.0 241.8" stroke="#d0f52e" stroke-width="1.54"/>
<path d="M350.0 271.0L693.0 187.5" stroke="#d0f52e" stroke-width="1.44"/>
<path d="M344.0 283.2L688.0 199.5" stroke="#a8f03a" stroke-width="1.44"/>
<path d="M343.0 301.0L687.0 217.3" stroke="#d0f52e" stroke-width="1.44"/>
<path d="M352.0 319.0L695.0 235.5" stroke="#d2f34a" stroke-width="1.44"/>
<path d="M344.0 338.0L688.0 254.3" stroke="#d2f34a" stroke-width="1.34"/>
<path d="M425.0 195.5L520.0 172.4" stroke="#62e6a0" stroke-width="1.44"/>
<path d="M470.0 201.2L540.0 184.2" stroke="#7eea78" stroke-width="1.44"/>
<path d="M355.7 316.0L691.4 234.3" stroke="#44e46c" stroke-width="1.06"/>
<path d="M353.8 269.5L692.1 187.1" stroke="#d0f52e" stroke-width="1.49"/>
<path d="M353.8 269.5L362.8 267.3" stroke="#8eea50" stroke-width="1.49"/>
<path d="M359.3 296.4L699.6 213.6" stroke="#d0f52e" stroke-width="1.80"/>
<path d="M360.4 273.0L700.3 190.3" stroke="#a8f03a" stroke-width="1.82"/>
<path d="M366.6 343.5L702.7 261.7" stroke="#d2f34a" stroke-width="1.29"/>
<path d="M370.5 338.3L701.0 257.9" stroke="#d2f34a" stroke-width="1.34"/>
<path d="M369.4 325.6L710.8 242.5" stroke="#d2f34a" stroke-width="1.19"/>
<path d="M371.0 353.7L708.3 271.6" stroke="#38e2b4" stroke-width="1.15"/>
<path d="M371.2 306.7L703.8 225.7" stroke="#d0f52e" stroke-width="1.51"/>
<path d="M376.4 329.2L714.9 246.8" stroke="#5eec5c" stroke-width="1.15"/>
<path d="M377.6 345.4L710.6 264.3" stroke="#d2f34a" stroke-width="1.36"/>
<path d="M378.0 332.1L716.7 249.6" stroke="#d2f34a" stroke-width="1.23"/>
<path d="M377.6 276.7L709.1 196.0" stroke="#a8f03a" stroke-width="1.50"/>
<path d="M381.3 354.9L722.1 272.0" stroke="#d2f34a" stroke-width="1.27"/>
<path d="M385.1 348.0L722.7 265.9" stroke="#d2f34a" stroke-width="1.38"/>
<path d="M386.8 320.1L719.8 239.1" stroke="#a8f03a" stroke-width="1.76"/>
<path d="M388.3 252.8L729.6 169.7" stroke="#d0f52e" stroke-width="1.69"/>
</g>
<g stroke-linejoin="round">
<defs><linearGradient id="nz" x1="0" y1="0" x2="0.3" y2="1"><stop offset="0" stop-color="#3b7ce2"/><stop offset=".55" stop-color="#2a63c8"/><stop offset="1" stop-color="#1d4aa0"/></linearGradient></defs>
<path d="M550 302.4L593 293.6L593 311L560 321.6L550 322Z" fill="#183c84"/>
<path d="M563.6 300.4L571.4 298.8L571.4 301.6L563.6 303.2Z" fill="#aebde8"/>
<path d="M576.4 297.6L590.6 294.8L590.6 298L576.4 300.8Z" fill="#a6b8e6"/>
<path d="M561 305.6L574 303L574 317.4L561 320.4Z" fill="#1f4b9e"/>
<path d="M577.6 302.2L591 299.6L591 309.6L577.6 312.6Z" fill="#2050a6"/>
<path d="M585.6 310.2L600.6 307.6L600.8 316.2L604.2 317L604.2 319L585.6 323.4Z" fill="#2a66cc"/>
<path d="M600.6 307.6L601.6 308L601.8 316.6L600.8 316.2Z" fill="#1d4aa0"/>
<path d="M545 319.6L561 316.6L586 311.4L586 323.6L561.6 329.6L549 333.4L540 333.6Z" fill="#2962c6"/>
<path d="M569.6 316.4L575.8 315.2L575.8 323.2L569.6 324.6Z" fill="#4686e6"/>
<path d="M527.4 300.6C524.4 302.6 522.8 306 522.8 312C522.8 321 523.2 327.6 525.6 329.4C528 331.6 534 332.4 540.4 333.6L549.6 333.2L550.4 303.4L551.6 302.4L533.6 295Z" fill="url(#nz)"/>
<path d="M549.8 303.6L556.6 302.4L556.6 306.4L549.8 307.4Z" fill="#c4d0f0"/>
<path d="M549.6 308L558.6 306.4L558.6 318L549.6 320Z" fill="#2458b6"/>
<path d="M523.4 324C524 328 525 329.4 527 330.4L540.4 333.6L549.6 333.2L549.6 329.4C540 329.6 530 328 523.4 324Z" fill="#1a439a"/>
<path d="M527.4 300.6L533.6 295L586.9 281.6L597.6 284.4L605 288.9L605 290.8L551.6 302.8Z" fill="#2f6fd8"/>
<path d="M533.6 295L586.9 281.6L597.6 284.4L544 297.8Z" fill="#2860c4"/>
<path d="M551.6 302.4L605 288.9L605 290.8L551.8 304.2Z" fill="#1c469c"/>
<path d="M541 299.6L600 285.8L605 288.9L551.6 302.4Z" fill="#3d7fe4"/>
<path d="M558.6 302.4L560 302.2L560 321.4L558.6 321.6Z" fill="#3472d8"/>
<path d="M591.6 292.8L593.6 292.4L593.6 309L591.6 309.4Z" fill="#3a78dc"/>
<ellipse cx="555.9" cy="329.8" rx="4.7" ry="5" fill="#2458b8"/><ellipse cx="556.4" cy="330.2" rx="3.2" ry="3.6" fill="#3f82e6"/>
<ellipse cx="589.4" cy="322.2" rx="4.2" ry="4.5" fill="#2458b8"/><ellipse cx="589.8" cy="322.6" rx="2.8" ry="3.2" fill="#3f82e6"/>
</g>
<g fill="none" stroke-linecap="butt" filter="url(#soft)">
<path d="M398.1 254.2L731.3 173.1" stroke="#d0f52e" stroke-width="1.45"/>
<path d="M409.8 245.4L747.8 163.2" stroke="#d0f52e" stroke-width="1.75"/>
<path d="M414.5 271.0L752.7 188.6" stroke="#d0f52e" stroke-width="1.56"/>
<path d="M417.4 264.3L751.4 183.0" stroke="#a8f03a" stroke-width="1.80"/>
<path d="M419.1 274.3L747.5 194.4" stroke="#44e46c" stroke-width="1.06"/>
<path d="M427.8 284.6L763.5 202.9" stroke="#36e09a" stroke-width="1.06"/>
<path d="M424.3 275.1L756.8 194.1" stroke="#d0f52e" stroke-width="1.66"/>
<path d="M424.3 275.1L433.3 272.9" stroke="#8eea50" stroke-width="1.66"/>
<path d="M433.9 302.0L761.6 222.3" stroke="#d0f52e" stroke-width="1.60"/>
<path d="M433.9 302.0L442.9 299.8" stroke="#8eea50" stroke-width="1.60"/>
<path d="M433.5 305.8L772.2 223.3" stroke="#36e09a" stroke-width="1.06"/>
<path d="M401.0 231.4L746.0 147.4" stroke="#d0f52e" stroke-width="1.63"/>
<path d="M411.7 235.0L756.7 151.0" stroke="#d0f52e" stroke-width="1.63"/>
<path d="M421.3 239.7L766.3 155.7" stroke="#d0f52e" stroke-width="1.63"/>
<path d="M387.0 359.2L731.0 275.5" stroke="#a8f03a" stroke-width="1.15"/>
<path d="M398.9 364.6L743.0 280.8" stroke="#a8f03a" stroke-width="1.15"/>
<path d="M418.0 371.0L785.9 281.5" stroke="#45e89a" stroke-width="1.25"/>
<path d="M440.0 379.9L781.3 296.8" stroke="#3ee4a0" stroke-width="1.25"/>
<path d="M436.3 284.5L781.3 200.5" stroke="#38e2b4" stroke-width="1.25"/>
<path d="M438.5 311.5L783.5 227.5" stroke="#5eec5c" stroke-width="1.34"/>
<path d="M415.0 313.3L760.0 229.3" stroke="#d0f52e" stroke-width="1.54"/>
<path d="M415.0 313.3L424.0 311.1" stroke="#8eea50" stroke-width="1.54"/>
<path d="M406.0 320.8L751.0 236.8" stroke="#d0f52e" stroke-width="1.54"/>
<path d="M421.0 324.4L766.0 240.4" stroke="#d0f52e" stroke-width="1.54"/>
<path d="M432.0 326.5L777.0 242.5" stroke="#d0f52e" stroke-width="1.44"/>
<path d="M425.6 342.8L770.6 258.8" stroke="#d2f34a" stroke-width="1.01"/>
<path d="M434.0 348.0L779.0 264.0" stroke="#d2f34a" stroke-width="1.01"/>
<path d="M415.0 352.9L760.0 268.9" stroke="#d2f34a" stroke-width="1.01"/>
<path d="M432.0 300.4L777.0 216.4" stroke="#d0f52e" stroke-width="1.54"/>
<path d="M425.6 282.9L770.6 198.9" stroke="#d0f52e" stroke-width="1.54"/>
<path d="M403.0 289.7L748.0 205.7" stroke="#d0f52e" stroke-width="1.54"/>
<path d="M423.5 373.2L768.5 289.2" stroke="#d2f34a" stroke-width="1.34"/>
<path d="M406.6 334.0L751.6 250.0" stroke="#d2f34a" stroke-width="1.01"/>
<path d="M401.0 338.6L746.0 254.6" stroke="#d2f34a" stroke-width="1.01"/>
<path d="M406.7 363.3L751.7 279.3" stroke="#d2f34a" stroke-width="1.25"/>
<path d="M387.3 364.9L732.3 280.9" stroke="#d2f34a" stroke-width="1.25"/>
<path d="M414.6 372.9L759.6 288.9" stroke="#d2f34a" stroke-width="1.25"/>
<path d="M414.0 322.9L759.0 238.9" stroke="#d2f34a" stroke-width="1.15"/>
<path d="M434.0 250.0L779.0 166.0" stroke="#d0f52e" stroke-width="1.54"/>
<path d="M425.6 260.7L770.6 176.7" stroke="#d0f52e" stroke-width="1.54"/>
<path d="M425.6 260.7L434.6 258.5" stroke="#8eea50" stroke-width="1.54"/>
<path d="M435.0 264.0L780.0 180.0" stroke="#d0f52e" stroke-width="1.54"/>
<path d="M435.0 264.0L444.0 261.8" stroke="#8eea50" stroke-width="1.54"/>
<path d="M423.5 271.4L768.5 187.4" stroke="#d0f52e" stroke-width="1.54"/>
<path d="M410.6 275.7L755.6 191.7" stroke="#d0f52e" stroke-width="1.54"/>
<path d="M411.7 249.4L756.7 165.4" stroke="#d0f52e" stroke-width="1.54"/>
<path d="M411.7 249.4L420.7 247.2" stroke="#8eea50" stroke-width="1.54"/>
</g>
<g stroke="#20202a" stroke-width=".75" fill="none" opacity=".9">
<path d="M676.3 112L679.8 268.2" stroke-dasharray="3 .8 .8 .8"/>
<path d="M679.8 268.2L790 305.8" stroke-dasharray="4 .8 .8 .8"/>
<path d="M373.6 342L398.6 336"/>
<path d="M482.6 315.8L520 306.8" stroke-dasharray=".9 .9" stroke="#3a4a20"/>
<path d="M630 280.2L651 275.2" stroke-dasharray=".9 .9" stroke="#3a4a20"/>
</g>
<g stroke="#262c40" stroke-width=".72" fill="none" stroke-linecap="round" opacity=".88">
<path d="M331.2 196L676.3 112" />
<path d="M676.3 112L786.8 151" />
<path d="M786.8 151L441.8 234.8" />
<path d="M441.8 234.8L331.2 196" />
<path d="M331.2 196L335.6 351.2" />
<path d="M441.8 234.8L445.4 389.8" />
<path d="M786.8 151L790 305.8" />
<path d="M335.6 351.2L445.4 389.8" />
<path d="M445.4 389.8L790 305.8" />
</g>
<text x="246.8" y="84" font-family="Liberation Sans, sans-serif" font-size="9.6" fill="#111" text-anchor="start">Velocity</text>
<text x="246.8" y="93.4" font-family="Liberation Sans, sans-serif" font-size="8.7" fill="#111" text-anchor="start">Streamline 1</text>
<rect x="246.6" y="100.2" width="12.6" height="165.2" fill="url(#lg)"/>
<path d="M246.6 100.2h14M259.2 142.4h2M259.2 183.6h2M259.2 224.8h2M246.6 265.4h14" stroke="#222" stroke-width=".6"/>
<text x="264.8" y="104.7" font-family="Liberation Sans, sans-serif" font-size="9.5" fill="#111" text-anchor="start">3.423e+001</text>
<text x="264.8" y="145.8" font-family="Liberation Sans, sans-serif" font-size="9.5" fill="#111" text-anchor="start">2.567e+001</text>
<text x="264.8" y="186.9" font-family="Liberation Sans, sans-serif" font-size="9.5" fill="#111" text-anchor="start">1.711e+001</text>
<text x="264.8" y="228.6" font-family="Liberation Sans, sans-serif" font-size="9.5" fill="#111" text-anchor="start">8.557e+000</text>
<text x="264.8" y="270.2" font-family="Liberation Sans, sans-serif" font-size="9.5" fill="#111" text-anchor="start">0.000e+000</text>
<text x="246.6" y="281.6" font-family="Liberation Sans, sans-serif" font-size="9.5" fill="#111" text-anchor="start">[m s^-1]</text>
<text x="866.6" y="86" font-family="Liberation Sans, sans-serif" font-size="14.4" fill="#fff" text-anchor="end" font-weight="bold" transform="translate(866.6 86) scale(0.775 1) translate(-866.6 -86)">ANSYS</text>
<text x="866.4" y="93.6" font-family="Liberation Sans, sans-serif" font-size="7.4" fill="#f4f6ff" text-anchor="end">R16.2</text>
<rect x="467.6" y="417.4" width="186.6" height="4.8" fill="#fff" stroke="#222" stroke-width=".5"/>
<rect x="467.6" y="417.4" width="46.6" height="4.8" fill="#000"/><rect x="560.8" y="417.4" width="46.7" height="4.8" fill="#000"/>
<text x="467.6" y="415.2" font-family="Liberation Sans, sans-serif" font-size="6.1" fill="#111" text-anchor="middle">0</text>
<text x="560.8" y="415.2" font-family="Liberation Sans, sans-serif" font-size="6.1" fill="#111" text-anchor="middle">0.150</text>
<text x="640.8" y="415.2" font-family="Liberation Sans, sans-serif" font-size="6.1" fill="#111" text-anchor="start">0.300</text>
<text x="658.8" y="415.2" font-family="Liberation Sans, sans-serif" font-size="6.1" fill="#111" text-anchor="start">(m)</text>
<text x="514.2" y="428.6" font-family="Liberation Sans, sans-serif" font-size="6.1" fill="#111" text-anchor="middle">0.075</text>
<text x="607.4" y="428.6" font-family="Liberation Sans, sans-serif" font-size="6.1" fill="#111" text-anchor="middle">0.225</text>
<g stroke-linecap="round">
<path d="M833.2 402.6L822 399" stroke="#1818a0" stroke-width="1.9"/><path d="M817.6 397.4l5.4-.8-1.8 4.2z" fill="#1818a0" stroke="#1818a0" stroke-width=".6"/>
<path d="M833.2 402.6L818 407" stroke="#d02020" stroke-width="1.8"/><path d="M813.6 408.2l4.4-3.4 1.4 4.4z" fill="#d02020" stroke="#d02020" stroke-width=".6"/>
<path d="M833.2 402.8V382.4" stroke="#1a9a2a" stroke-width="1.7"/><path d="M833.2 377.8l2.2 5.2h-4.4z" fill="#1a9a2a" stroke="#1a9a2a" stroke-width=".6"/>
</g>
<circle cx="814.8" cy="390.4" r="2.4" fill="#30d0e0"/><circle cx="814.2" cy="389.8" r="1" fill="#a0f0f8"/>
<text x="835.6" y="372.4" font-family="Liberation Sans, sans-serif" font-size="5.6" fill="#2a9a4a" text-anchor="middle">Y</text>
<text x="810.4" y="408" font-family="Liberation Sans, sans-serif" font-size="5.6" fill="#e04040" text-anchor="middle">X</text>
<text x="815.4" y="396.6" font-family="Liberation Sans, sans-serif" font-size="5" fill="#3a4ad0" text-anchor="middle">Z</text>
</svg>
<div class="abs" style="left:239px;top:438.4px;width:638px;height:10.4px;background:#f0f0f0"></div>
<div class="abs" style="left:244.4px;top:438.4px;width:40.6px;height:10.4px;background:#fff"></div>
<div class="t" style="left:251.4px;top:440.5px;height:8px;line-height:8px;font-size:6.3px;color:#222;transform:scaleX(0.922);transform-origin:0 50%;">3D Viewer</div>
<div class="abs" style="left:285px;top:438.8px;width:47.80000000000001px;height:9.8px;background:#f0f0f0;border-left:0.6px solid #dedede;border-right:0.6px solid #dedede;border-top:0.6px solid #e2e2e2"></div>
<div class="t" style="left:292.3px;top:440.2px;height:8px;line-height:8px;font-size:6.3px;color:#222;transform:scaleX(0.922);transform-origin:0 50%;">Table Viewer</div>
<div class="abs" style="left:332.8px;top:438.8px;width:48.19999999999999px;height:9.8px;background:#f0f0f0;border-left:0.6px solid #dedede;border-right:0.6px solid #dedede;border-top:0.6px solid #e2e2e2"></div>
<div class="t" style="left:340.2px;top:440.2px;height:8px;line-height:8px;font-size:6.3px;color:#222;transform:scaleX(0.922);transform-origin:0 50%;">Chart Viewer</div>
<div class="abs" style="left:381px;top:438.8px;width:56.19999999999999px;height:9.8px;background:#f0f0f0;border-left:0.6px solid #dedede;border-right:0.6px solid #dedede;border-top:0.6px solid #e2e2e2"></div>
<div class="t" style="left:386.9px;top:440.2px;height:8px;line-height:8px;font-size:6.3px;color:#222;transform:scaleX(0.922);transform-origin:0 50%;">Comment Viewer</div>
<div class="abs" style="left:437.2px;top:438.8px;width:52.80000000000001px;height:9.8px;background:#f0f0f0;border-left:0.6px solid #dedede;border-right:0.6px solid #dedede;border-top:0.6px solid #e2e2e2"></div>
<div class="t" style="left:445.2px;top:440.2px;height:8px;line-height:8px;font-size:6.3px;color:#222;transform:scaleX(0.922);transform-origin:0 50%;">Report Viewer</div>
<div class="abs" style="left:0;top:448.6px;width:877px;height:15.4px;background:#f0f0f0"></div>
<div class="abs" style="left:0;top:463.8px;width:877px;height:3.2px;background:#3d5a2a"></div>
<div class="abs" style="left:0;top:463.4px;width:877px;height:.8px;background:#9aa890"></div>
</div>
</body></html>
